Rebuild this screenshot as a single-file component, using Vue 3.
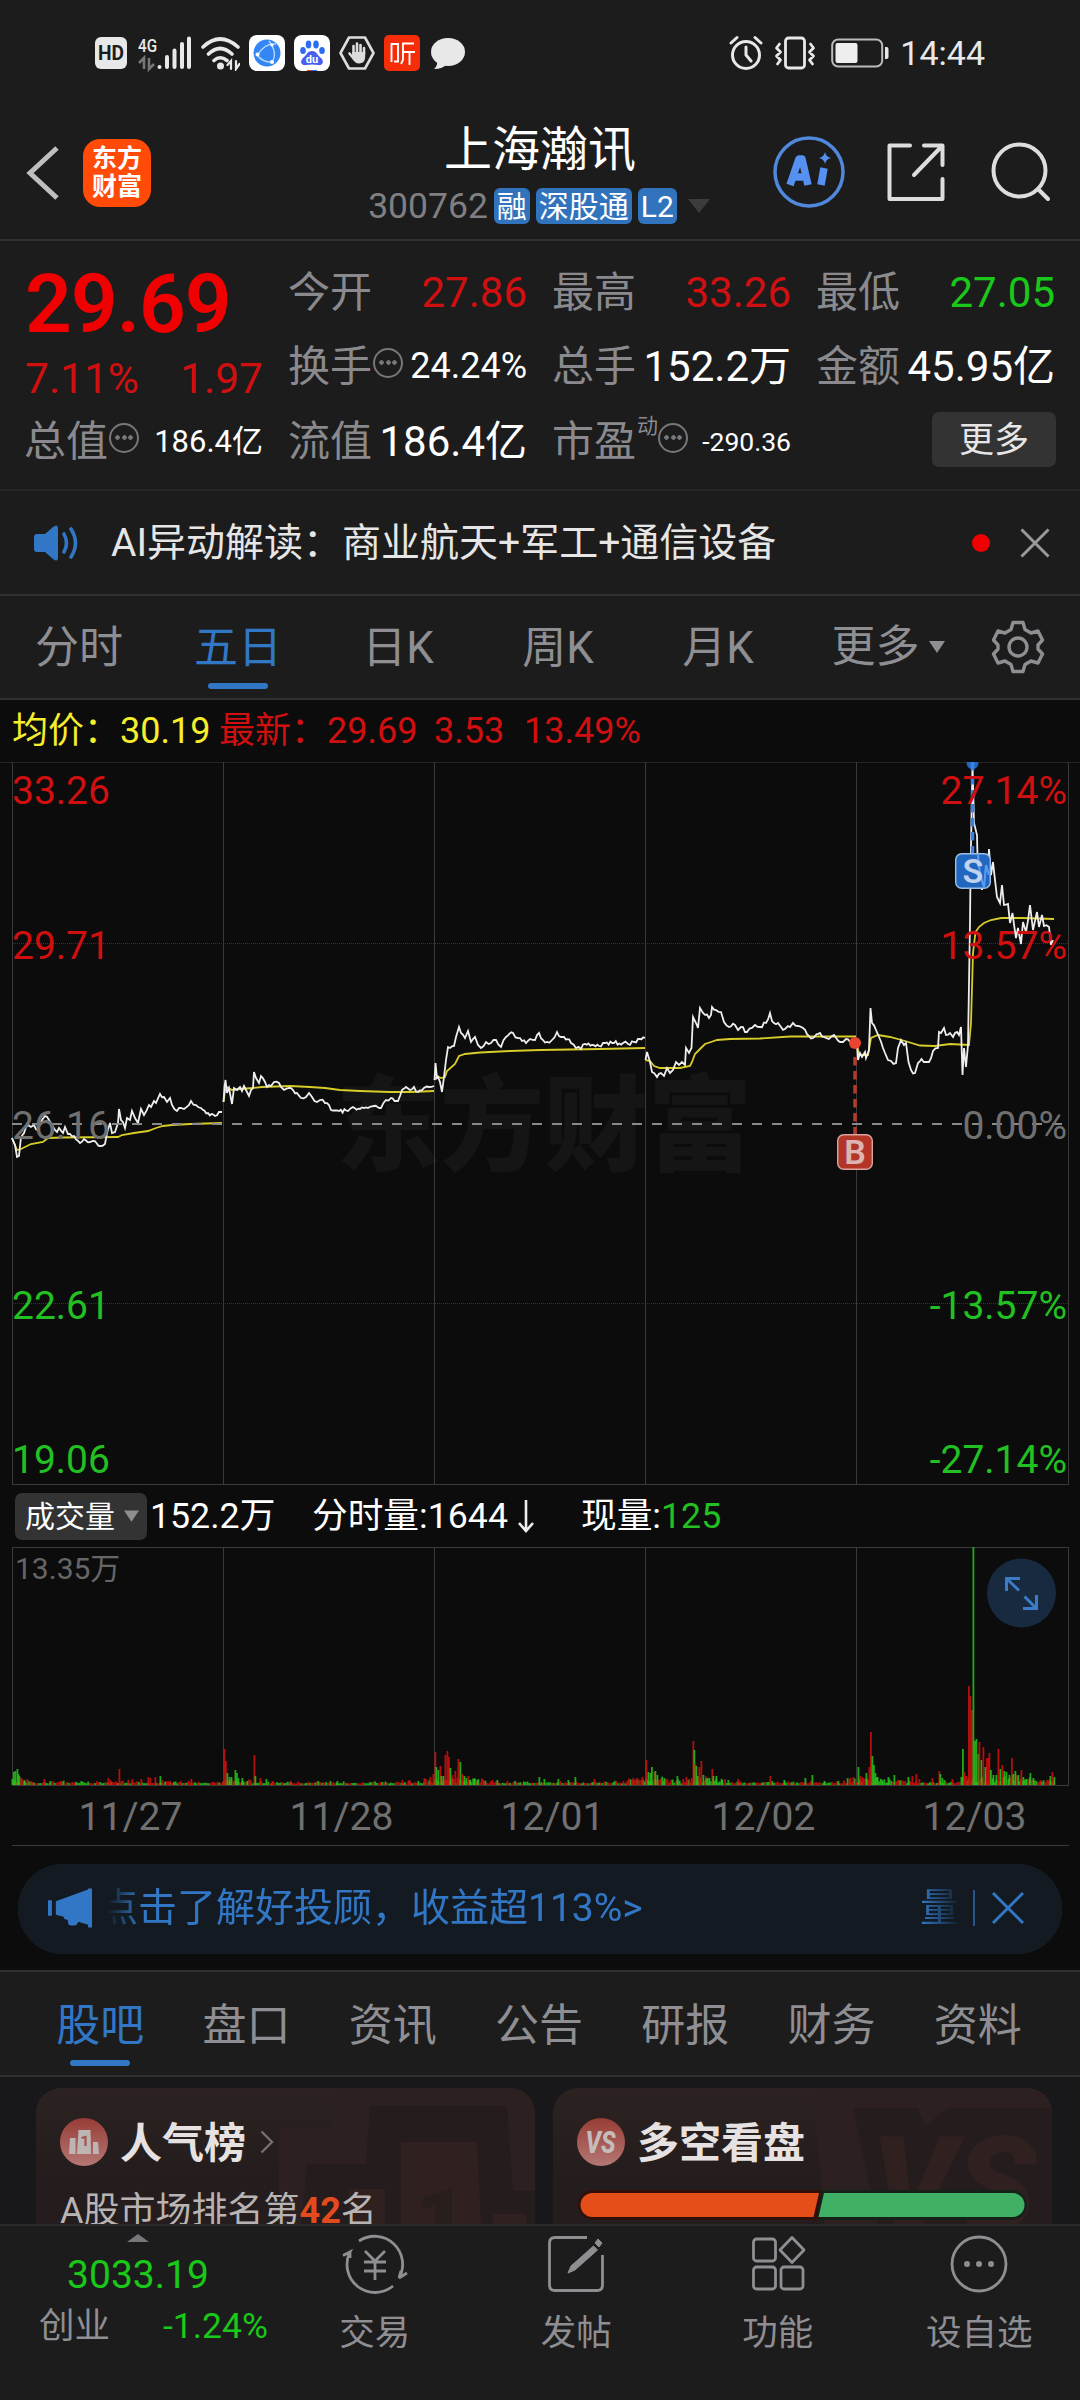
<script setup>
import { ref } from "vue"

const period = ref("五日")
const section = ref("股吧")

const periods = ["分时", "五日", "日K", "周K", "月K"]
const sections = ["股吧", "盘口", "资讯", "公告", "研报", "财务", "资料"]
const dates = ["11/27", "11/28", "12/01", "12/02", "12/03"]

const gridX = [12.5, 223.5, 434.5, 645.5, 856.5, 1068.5]

const axis = [
  { y: 42, price: "33.26", rate: "27.14%", type: "up" },
  { y: 197, price: "29.71", rate: "13.57%", type: "up" },
  { y: 377, price: "26.16", rate: "0.00%", type: "flat" },
  { y: 557, price: "22.61", rate: "-13.57%", type: "down" },
  { y: 711, price: "19.06", rate: "-27.14%", type: "down" }
]

const priceLines = [
  "12,376 15,383 17,395 19,394 21,375 24,371 28,363 31,365 34,363 38,368 42,358 45,354 49,358 52,363 57,370 59,366 63,371 65,365 68,372 74,374 80,381 84,377 90,380 93,379 100,384 105,382 107,371 110,361 112,371 115,370 118,361 119,347 121,358 125,366 127,356 130,358 132,349 135,356 138,361 141,347 144,353 149,343 151,345 154,339 156,341 160,332 164,335 167,340 170,336 172,343 177,349 181,346 184,347 189,343 191,339 196,343 201,346 208,351 215,354 219,350 222,350",
  "223.5,340 224.5,325 225.5,318 227,331 229,326 232,342 234,326 237,328 240,325 242,329 244,324 247,330 249,334 251,328 253,326 254,310 256,316 259,321 261,314 265,320 267,325 271,324 274,320 279,321 281,325 284,328 289,326 293,328 297,331 301,336 306,335 309,331 312,335 317,340 320,338 325,341 329,343 331,348 339,349 348,349 353,345 360,347 368,346 374,344 381,346 386,338 391,336 398,339 402,328 406,325 410,328 414,325 418,330 424,326 429,325 434,324",
  "434.5,318 435.5,301 437,316 438,315 440,320 442,330 444,315 446,298 448,285 450,286 454,284 456,275 459,265 461,271 465,276 468,269 471,280 475,275 478,283 481,286 486,280 491,281 496,278 501,285 506,275 513,271 518,276 526,281 530,277 535,278 539,271 543,278 547,280 552,278 557,270 561,275 564,275 571,281 576,286 581,287 585,282 592,283 599,284 605,281 614,281 623,281 628,282 634,280 638,277 645,276",
  "645.5,298 647,290 650,300 652,310 657,315 661,311 664,314 667,306 670,311 673,308 676,300 679,303 682,300 685,303 686,286 689,291 691.5,286 693,255 696,261 698,266 700,246 703,251 709,256 711,253 712,245 716,248 721,250 724,260 729,265 735,263 738,268 741,265 747,270 752,266 755,263 760,265 766,261 770,251 772,259 778,261 781,265 785,267 788,264 790,265 793,261 798,264 803,266 809,274 813,276 820,271 824,275 829,277 834,273 840,280 843,280 846,277 852,280 856,281",
  "857,281 858,298 860,291 862,295 865,290 866,296 869,288 870.5,246 872,261 876,268 879,275 883,286 885,291 888,298 891,299 896,301 898,286 901,278 904,283 906,281 908.5,300 911,308 915,311 918,301 921.5,297 926,300 929,300 933,289 938,286 939,270 941,271 944,266 946,273 950,271 953,275 957,270 959,273 961,265 962.5,313 964,286 966,305 968,283 970,161 970.5,111 972.5,1 974,61 977,73 977.5,95 982,128 984,105 987,121 989,87 991,113 993,100 995,118 997,135 1000,141 1002,123 1004,143 1008,142 1010,161 1012.5,151 1016,176 1018,166 1021,182 1023,160 1026,170 1030,143 1033,168 1037,150 1039,165 1042,153 1044,164 1049,165 1051,183 1053,178"
]

const avgLines = [
  "12,376 17,388 21,387 31,382 43,380 48,376 62,375.5 118,375 122,373 134,371 148,369 156,366 163,364 172,363 190,362 222,361",
  "223.5,340 225,329 227,325 232,328 240,327 253,326 262,325 290,324 310,325 325,326 340,328 360,329 390,330 410,330 434,329",
  "434.5,318 437,314 441,316 445,315 447,309 455,302 459,294 465,292 480,290.5 510,289 540,288 600,287 645,286",
  "645.5,298 650,299 654,304 660,306 680,306 690,304 692,300 695,292 700,287 705,282 711,280 717,278 730,277 760,276.5 790,274.5 856,274.5",
  "857,281 858.5,293 868,293 871,276 878,273 890,275 905,279 920,283.5 935,284 950,282 969,283 971,261 973,191 975.5,170 979,165 984,161 991,158 1001,156 1022,156 1054,157"
]

// small deterministic jitter between the key points
let seed = 7
const random = () => {
  seed = (seed * 16807) % 2147483647
  return seed / 2147483647
}

const jitter = (line) => {
  const points = line.split(" ").map(p => p.split(",").map(Number))
  const result = []
  points.forEach((point, i) => {
    result.push(point)
    const next = points[i + 1]
    if (!next || next[0] - point[0] < 3) return
    const steps = Math.floor((next[0] - point[0]) / 1.7)
    for (let s = 1; s < steps; s++) {
      const t = s / steps
      result.push([
        (point[0] + (next[0] - point[0]) * t).toFixed(1),
        (point[1] + (next[1] - point[1]) * t + (random() - 0.5) * 4).toFixed(1)
      ])
    }
  })
  return result.map(p => p.join(",")).join(" ")
}

const prices = priceLines.map(jitter)

// x, height, direction
const peaks = "12,6,g 13.5,13,g 15,14,g 17,16,g 18,11,g 19,9,g 21,7,r 24,5,g 27,6,r 31,4,r 44,6,r 50,4,g 61,4,r 108,7,r 110,5,r 119,16,r 121,4,r 128,5,r 132,6,r 141,6,r 148,8,r 150,7,r 155,8,r 160,9,g 162,5,r 170,4,r 188,4,r 191,6,r 224,36,r 225.5,24,r 227,12,g 229,8,g 231,8,g 235,15,g 236.5,12,g 238,7,g 242,7,g 247,4,g 254,30,r 255,9,g 260,7,r 266,6,g 272,4,r 290,4,r 318,4,g 330,4,g 337,4,g 402,5,r 409,5,r 418,4,g 424,7,r 430,8,r 433,11,r 435,33,r 436,18,g 438,15,g 440,19,r 441,9,g 443,9,g 445,30,r 447,34,r 448.5,28,r 450,17,g 452,10,r 455,14,r 458,26,r 460,23,g 462,11,r 464,9,g 466,7,g 468,9,r 470,5,g 474,6,g 477,5,g 483,5,r 492,5,r 497,5,g 507,4,r 539,8,g 544,6,g 558,6,g 568,5,g 575,8,g 594,6,r 623,4,r 633,7,r 637,7,r 642,8,r 646,25,r 648,13,g 650,12,g 651.5,18,g 654,13,r 655,14,g 657,10,g 664,7,g 677,9,g 686,8,r 689,6,r 693,44,r 694,35,g 695,21,r 696,19,g 697.5,9,g 699,18,r 701,24,r 703,10,g 706,6,g 709,7,g 712,16,r 713,9,g 716,6,g 722,5,g 728,5,g 738,6,r 770,9,r 772,4,g 784,5,g 805,7,g 812,10,g 824,4,g 838,4,g 850,7,r 853,8,r 858,18,g 860,9,r 862,8,r 866,12,g 869,18,r 870.5,53,r 872,29,g 873.5,20,g 875,12,g 877,8,g 882,5,g 888,8,g 894,10,g 898,5,r 908,8,g 912,9,r 916,11,r 919,6,r 932,7,r 939,14,r 940,11,g 942,7,g 944,5,g 952,6,r 962.5,36,g 964,13,r 966,9,r 968.5,99,r 970,89,r 971.5,75,r 974.5,44,g 976,46,g 978,31,g 979,43,r 981,25,g 983,38,r 985,18,g 986.5,27,r 988,27,r 989,32,r 990.5,15,g 993,10,g 996,10,g 998,36,r 1000,16,g 1002,20,r 1004,14,g 1006,13,g 1009,10,g 1011.5,27,r 1013,11,g 1015,14,g 1018,10,g 1021,15,r 1023,8,g 1026,6,g 1030,12,g 1033,7,g 1040,5,r 1050,9,g 1052,13,r 1054,8,g 973,238,g"

// first and last x of the busier stretches, and how high they go
const busy = [[12, 30, 3], [223, 250, 3], [425, 485, 5], [625, 680, 5], [682, 725, 5], [846, 885, 5], [888, 905, 3], [958, 1018, 8], [1018, 1055, 5]]

const volumes = []
for (let x = 12; x < 1055; x += 1.75) {
  const area = busy.find(b => x >= b[0] && x <= b[1])
  volumes.push({
    x,
    h: 1.6 + random() * random() * 3 + (area ? random() * area[2] : 0),
    up: random() > 0.5
  })
}
peaks.split(" ").forEach(item => {
  const [x, h, direction] = item.split(",")
  volumes.push({ x: Number(x) - 0.5, h: Number(h), up: direction === "r" })
})
</script>

<template>
  <div class="page">
    <div class="status">
      <svg class="hd" viewBox="0 0 34 34"><rect x="1" y="1" width="32" height="32" rx="6" fill="#e8e8e8" /><text x="17" y="24" text-anchor="middle" textLength="26" lengthAdjust="spacingAndGlyphs">HD</text></svg>
      <svg class="signal" viewBox="0 0 54 36">
        <text x="1" y="17" textLength="19" lengthAdjust="spacingAndGlyphs">4G</text>
        <path d="M7 34V23l-5 5M12 23v11l5-5" fill="none" stroke="#777" stroke-width="2.6" />
        <path d="M22.500 32v0M30 22v10M37.500 15.500v16.500M45 9v23M52 3.500v28.500" stroke="#e8e8e8" stroke-width="4" stroke-linecap="round" />
      </svg>
      <svg class="wifi" viewBox="0 0 40 36" fill="none" stroke="#e8e8e8" stroke-width="3.6" stroke-linecap="round">
        <path d="M3 12Q20-4 38 12M8.500 19Q20 8 32 19M14 25.500Q20 20 27 25.500" />
        <circle cx="20.500" cy="31" r="3.500" fill="#e8e8e8" stroke="none" />
        <path d="M31 34V26l-3.500 4M36 26v8l3.500-5" stroke-width="2.200" />
      </svg>
      <svg class="app" viewBox="0 0 36 36">
        <rect width="36" height="36" rx="8" fill="#fff" /><circle cx="18" cy="18" r="13.500" fill="#3486f5" />
        <path d="M8 21Q15 8 27 9M8 20Q14 28 25 27M20 6Q29 18 23 27" fill="none" stroke="#b9dcff" stroke-width="1.300" />
        <circle cx="8.500" cy="19.500" r="2" fill="#fff" /><circle cx="23" cy="27" r="2" fill="#fff" /><circle cx="23" cy="10" r="1.600" fill="#fff" />
      </svg>
      <svg class="app" viewBox="0 0 36 36">
        <rect width="36" height="36" rx="8" fill="#fff" />
        <g fill="#2c6cf0"><ellipse cx="9" cy="15.500" rx="2.800" ry="3.600" /><ellipse cx="14.500" cy="9.500" rx="2.800" ry="4" /><ellipse cx="22" cy="9.500" rx="2.800" ry="4" /><ellipse cx="28" cy="15.500" rx="2.800" ry="3.600" /></g>
        <path d="M18 16c5 0 5 4 9 7 4 4 1 8-3 7q-6-1-12 0c-4 1-7-3-3-7 4-3 4-7 9-7Z" fill="#4a5ff0" />
        <text class="du" x="18" y="28" text-anchor="middle">du</text>
        <path d="M13 36v-1h5v1Z" fill="#e33" /><path d="M18 36v-1h5v1Z" fill="#36f" />
      </svg>
      <svg class="app" viewBox="0 0 36 36" fill="none">
        <path d="M10 2.500H26L34.500 18L26 33.500H10L1.500 18Z" stroke="#ddd" stroke-width="2.600" stroke-linejoin="round" />
        <path d="M14.500 19V11M18 18V8.500M21.500 18V10M25 19V13M10.500 18.500l5 6" stroke="#ddd" stroke-width="2.600" stroke-linecap="round" />
        <path d="M13.200 17H26.200V22Q26 28.500 20 28.500Q16 28.500 13 23Z" fill="#ddd" />
      </svg>
      <svg class="app" viewBox="0 0 36 36">
        <rect width="36" height="36" rx="5" fill="#f52d08" />
        <path d="M7.500 27V9H14V26.500H10M30 8.500H19V25L17 29M19 17H31M25.500 17V30" fill="none" stroke="#fff" stroke-width="1.900" />
      </svg>
      <svg class="app" viewBox="0 0 36 36"><ellipse cx="19" cy="17" rx="17" ry="14" fill="#e8e8e8" /><path d="M8 25q1 6-3 9 9 0 13-5Z" fill="#e8e8e8" /></svg>
      <div class="grow"></div>
      <svg class="alarm" viewBox="0 0 34 36" fill="none" stroke="#e8e8e8" stroke-width="3" stroke-linecap="round">
        <circle cx="17" cy="20" r="13.500" /><path d="M17 12v8l5 6M2 8l6-5.500M32 8l-6-5.500" />
      </svg>
      <svg class="vibrate" viewBox="0 0 42 36" fill="none" stroke="#e8e8e8" stroke-width="2.800" stroke-linecap="round" stroke-linejoin="round">
        <rect x="11.500" y="3" width="19" height="30" rx="3" /><path d="M5.500 9l-3 4 4 4-4 4 4 4-3 4M36.500 9l3 4-4 4 4 4-4 4 3 4" />
      </svg>
      <svg class="battery" viewBox="0 0 58 30">
        <rect x="1.200" y="1.500" width="50" height="27" rx="6" fill="none" stroke="#bbb" stroke-width="2" />
        <rect x="4.500" y="5" width="22" height="20" rx="2" fill="#eee" /><path d="M54 9h1.500q2 0 2 2v8q0 2-2 2H54Z" fill="#e8e8e8" />
      </svg>
      <span class="clock">14:44</span>
    </div>

    <header class="header">
      <div class="left">
        <svg class="back" viewBox="0 0 34 56"><path d="M31 3L4 28L31 53" fill="none" stroke="#bfbfbf" stroke-width="5" /></svg>
        <div class="logo"><span>东方</span><span>财富</span></div>
      </div>
      <div class="name">
        <h1>上海瀚讯</h1>
        <div class="code">
          <span>300762</span><b>融</b><b>深股通</b><b>L2</b>
          <svg viewBox="0 0 22 14"><path d="M0 0H22L11 14Z" fill="#3c3c3c" /></svg>
        </div>
      </div>
      <div class="actions">
        <svg class="ai" viewBox="0 0 72 72">
          <circle cx="36" cy="36" r="34" fill="none" stroke="#5088dc" stroke-width="3.500" />
          <g fill="none" stroke="#5590f2" stroke-linejoin="round"><path d="M17 49L26 23H29L35 49M21 41H33" stroke-width="7.500" /><path d="M51 32L48 49" stroke-width="7.500" /></g>
          <path d="M52 16q1 5 6 6-5 1-6 6-1-5-6-6 5-1 6-6Z" fill="#5590f2" />
        </svg>
        <svg class="share" viewBox="0 0 60 60" fill="none" stroke="#ddd" stroke-width="4" stroke-linecap="round" stroke-linejoin="round">
          <path d="M24 3.500H3.500V57H56.500V37" /><path d="M38 3.500H56.500V23M56 4L28 33" />
        </svg>
        <svg class="search" viewBox="0 0 60 60" fill="none" stroke="#ddd" stroke-width="4" stroke-linecap="round"><circle cx="28.500" cy="28.500" r="26" /><path d="M47 47L57 57" /></svg>
      </div>
    </header>

    <section class="quote">
      <div class="last">29.69</div>
      <div class="cell"><label>今开</label><span class="up">27.86</span></div>
      <div class="cell"><label>最高</label><span class="up">33.26</span></div>
      <div class="cell"><label>最低</label><span class="down">27.05</span></div>
      <div class="cell change"><span class="up">7.11%</span><span class="up">1.97</span></div>
      <div class="cell"><label>换手</label><i class="more-dot"></i><span class="mid">24.24%</span></div>
      <div class="cell"><label>总手</label><span>152.2万</span></div>
      <div class="cell"><label>金额</label><span>45.95亿</span></div>
      <div class="cell"><label>总值</label><i class="more-dot"></i><span class="low">186.4亿</span></div>
      <div class="cell"><label>流值</label><span>186.4亿</span></div>
      <div class="cell"><label>市盈<sup>动</sup></label><i class="more-dot"></i><span class="small">-290.36</span></div>
      <div class="cell end"><button>更多</button></div>
    </section>

    <section class="notice">
      <svg class="speaker" viewBox="0 0 46 38">
        <path d="M3 10h8l8-7q5-4 5 2v28q0 6-5 2l-8-7H3q-3 0-3-3V13q0-3 3-3Z" fill="#3277c6" />
        <path d="M30 10q5 9 0 18M37 5q9 14 0 28" fill="none" stroke="#3277c6" stroke-width="3.600" stroke-linecap="round" />
      </svg>
      <span>AI异动解读：商业航天+军工+通信设备</span>
      <i class="red-dot"></i>
      <svg class="close" viewBox="0 0 30 30"><path d="M1.500 1.500L28.500 28.500M28.500 1.500L1.500 28.500" stroke="#999" stroke-width="3" /></svg>
    </section>

    <nav class="periods">
      <a v-for="item in periods" :key="item" :class="{ active: item === period }" @click="period = item">{{ item }}</a>
      <a class="wide">更多<svg viewBox="0 0 16 12"><path d="M0 0H16L8 12Z" fill="#8e8e93" /></svg></a>
      <svg class="gear" viewBox="0 0 54 54" fill="none" stroke="#8e8e93" stroke-width="3.400" stroke-linejoin="round">
        <path d="M22 2.500H32L34 9.500L40 13L47 11L51.500 20L47 25V29L51.500 34L47 43L40 41L34 44.500L32 51.500H22L20 44.500L14 41L7 43L2.500 34L7 29V25L2.500 20L7 11L14 13L20 9.500Z" /><circle cx="27" cy="27" r="9" />
      </svg>
    </nav>

    <div class="summary">
      <span class="avg">均价：30.19</span><span class="new">最新：29.69</span><span>3.53</span><span>13.49%</span>
    </div>

    <svg class="chart" viewBox="0 0 1080 723">
      <text class="watermark" x="336" y="401">东方财富</text>
      <path class="grid" d="M0 0H1080M12 722.500H1069" />
      <line v-for="x in gridX" :key="x" class="grid" :x1="x" :x2="x" y1="0" y2="723" />
      <path class="dotted" d="M13 181.500H1068M13 541.500H1068" />
      <polyline v-for="line in avgLines" :key="line" class="avg-line" :points="line" />
      <polyline v-for="line in prices" :key="line" class="price-line" :points="line" />
      <path class="zero" d="M12 362H1064" />
      <circle cx="855" cy="281" r="6" fill="#e8442f" />
      <path d="M855 295V372" stroke="#b53a2b" stroke-width="3.500" stroke-dasharray="8.500 5.500" />
      <rect x="837.700" y="372.700" width="34.600" height="34.600" rx="6" fill="#b33527" stroke="#d9a59e" stroke-width="1.400" />
      <text class="mark buy" x="855" y="401.500">B</text>
      <path d="M966.500 0h12q0 7-6 7t-6-7Z" fill="#1f68c4" />
      <path d="M972.500 0V91" stroke="#3c82e0" stroke-width="3.500" stroke-dasharray="8.500 5.500" />
      <rect x="955.700" y="91.700" width="34.600" height="34.600" rx="6" fill="#2167c0" stroke="#9cc0ea" stroke-width="1.400" />
      <path d="M978 93l2 20 4 12 2-22 3 10" fill="none" stroke="#5a9cf5" stroke-width="2" />
      <text class="mark sell" x="973" y="120.500">S</text>
      <template v-for="row in axis" :key="row.price">
        <text :class="['axis', row.type]" x="12" :y="row.y">{{ row.price }}</text>
        <text :class="['axis', 'right', row.type]" x="1067" :y="row.y">{{ row.rate }}</text>
      </template>
    </svg>

    <div class="volume-head">
      <span class="pill">成交量<svg viewBox="0 0 16 12"><path d="M0 0H16L8 12Z" fill="#8e8e8e" /></svg></span>
      <span class="total">152.2万</span>
      <span class="minute">分时量:1644<svg viewBox="0 0 18 34"><path d="M9 1V32M2 24L9 32L16 24" fill="none" stroke="#eee" stroke-width="2.600" /></svg></span>
      <span>现量:<em>125</em></span>
    </div>

    <svg class="volume" viewBox="0 0 1080 239">
      <path class="grid" d="M12 .500H1069M12 238.500H1069" />
      <line v-for="x in gridX" :key="x" class="grid" :x1="x" :x2="x" y1="0" y2="239" />
      <rect v-for="(bar, i) in volumes" :key="i" :x="bar.x" :y="238 - bar.h" width="1.800" :height="bar.h" :class="bar.up ? 'bar-up' : 'bar-down'" />
      <text class="volume-max" x="15" y="32">13.35万</text>
      <circle cx="1021.500" cy="46" r="34.500" fill="#182a40" />
      <path d="M1006.500 44V31.500H1020M1007 32L1019 43.500M1024.500 49.500L1036 61M1036.500 48V61.500H1023" fill="none" stroke="#3a7cc8" stroke-width="3" />
    </svg>
    <div class="dates"><span v-for="date in dates" :key="date">{{ date }}</span></div>

    <div class="banner">
      <svg class="horn" viewBox="0 0 46 40"><path d="M0 12h4v16H0ZM8 13L41 1V0h4v40h-4v-3l-10-3q-2 6-10 3l-1-5q-4 0-4-3l-8-2Z" fill="#3277c6" /></svg>
      <div class="marquee"><span>点击了解好投顾，收益超113%&gt;</span><span class="next">量</span></div>
      <i class="divider"></i>
      <svg class="banner-close" viewBox="0 0 34 34"><path d="M2 2L32 32M32 2L2 32" stroke="#3277c6" stroke-width="3" /></svg>
    </div>

    <nav class="sections">
      <a v-for="item in sections" :key="item" :class="{ active: item === section }" @click="section = item">{{ item }}</a>
    </nav>

    <div class="cards">
      <article class="card">
        <svg class="card-bg" viewBox="0 0 499 137">
          <path d="M243 137V40H297V0H499V137Z" fill="#2c2120" /><path d="M265 137L271 76H330L334 18H471L477 103H499V137Z" fill="#251d1d" />
          <path d="M365 137V54H441L445 137ZM313 137V101H349V137ZM457 137V126H490V137Z" fill="#302020" /><path d="M386 110l30-10v37h-17v-20l-13 4Z" fill="#281e1d" />
        </svg>
        <div class="card-title">
          <svg class="badge" viewBox="0 0 48 48">
            <defs><linearGradient id="badgeFill" x2="0" y2="1"><stop offset="0" stop-color="#983c36" /><stop offset="1" stop-color="#b47874" /></linearGradient></defs>
            <circle cx="24" cy="24" r="24" fill="url(#badgeFill)" />
            <path d="M10 20h5.500v16H9ZM18.500 12h12L31 36H17ZM33 24h5l1 12h-6Z" fill="#bdb5b4" /><path d="M21.500 20l4-1v9" fill="none" stroke="#a25550" stroke-width="2.200" />
          </svg>
          <h2>人气榜</h2>
          <svg class="chevron" viewBox="0 0 14 24"><path d="M1.500 1.500L12 12L1.500 22.500" fill="none" stroke="#77706f" stroke-width="2.400" /></svg>
        </div>
        <p>A股市场排名第<b>42</b>名</p>
      </article>
      <article class="card">
        <svg class="card-bg" viewBox="0 0 499 137">
          <path d="M260 0H499V137H272Z" fill="#2c2120" /><path d="M300 20H365L372 38L395 20H499V137H325Z" fill="#251d1d" />
          <text class="vs-bg" x="318" y="142">VS</text>
        </svg>
        <div class="card-title">
          <svg class="badge" viewBox="0 0 48 48"><circle cx="24" cy="24" r="24" fill="url(#badgeFill)" /><text class="vs" x="23.500" y="35" text-anchor="middle" textLength="30" lengthAdjust="spacingAndGlyphs">VS</text></svg>
          <h2>多空看盘</h2>
        </div>
        <svg class="ratio" viewBox="0 0 449 30">
          <rect width="449" height="30" rx="15" fill="#16211a" /><path d="M15 0H243L239 30H15A15 15 0 0 1 15 0Z" fill="#32100a" />
          <path d="M14.500 3H241L235.500 27H14.500A12 12 0 0 1 14.500 3Z" fill="#e54e19" /><path d="M246 3H434.500A12 12 0 0 1 434.500 27H240.500Z" fill="#3fb064" />
        </svg>
      </article>
    </div>

    <footer class="bottom">
      <div class="index">
        <svg viewBox="0 0 22 8"><path d="M11 0L22 8H0Z" fill="#77777b" /></svg>
        <strong>3033.19</strong>
        <div><span>创业</span><em>-1.24%</em></div>
      </div>
      <div class="item">
        <svg viewBox="0 0 66 60"><path d="M17 7A28 28 0 0 1 57 44L65 39M51 52A28 28 0 0 1 8 18L1 21.500M8 18V24M57 44L59 37" /><path d="M23 17L33 27L43 17M22 28H44M22 37H44M33 27V46" /></svg>
        <span>交易</span>
      </div>
      <div class="item">
        <svg viewBox="0 0 66 60"><path d="M44 3.500H12Q6.500 3.500 6.500 9V51Q6.500 56.500 12 56.500H54Q59.500 56.500 59.500 51V21" /><path d="M55 5l4 4-3 4-4-4ZM50.500 12l4 4L32 36l-7 3 3-7Z" fill="#8e8e93" stroke-width="1" /></svg>
        <span>发帖</span>
      </div>
      <div class="item">
        <svg viewBox="0 0 66 60"><rect x="8.500" y="5" width="22" height="22" rx="3" /><rect x="8.500" y="33" width="22" height="22" rx="3" /><rect x="36" y="33" width="22" height="22" rx="3" /><path d="M47 3.500L59 16L47 28.500L35 16Z" stroke-linejoin="round" /></svg>
        <span>功能</span>
      </div>
      <div class="item">
        <svg viewBox="0 0 66 60"><circle cx="33" cy="30" r="27" /><g fill="#8e8e93" stroke="none"><circle cx="21" cy="30" r="3" /><circle cx="33" cy="30" r="3" /><circle cx="45" cy="30" r="3" /></g></svg>
        <span>设自选</span>
      </div>
    </footer>
  </div>
</template>

<style>
body {
  background: #1c1c1c;
}
</style>

<style scoped>
.page {
  width: 1080px;
  height: 2400px;
  overflow: hidden;
  background: #1c1c1c;
  color: #fff;
  font-family: Roboto, "Noto Sans CJK SC", sans-serif;
}

.page * {
  box-sizing: border-box;
}

svg {
  display: block;
  flex: none;
}

em,
i {
  font-style: normal;
}

.status {
  display: flex;
  align-items: center;
  gap: 9px;
  height: 105px;
  padding: 0 95px 0 94px;
}

.hd {
  width: 34px;
  height: 34px;
}

.hd text {
  font-size: 20px;
  font-weight: 700;
  fill: #1c1c1c;
}

.signal {
  width: 54px;
  height: 36px;
  overflow: visible;
}

.signal text {
  font-size: 19px;
  font-weight: 500;
  fill: #e8e8e8;
}

.wifi {
  width: 40px;
  height: 36px;
}

.app {
  width: 36px;
  height: 36px;
}

.du {
  font-size: 11px;
  font-weight: 700;
  fill: #fff;
}

.grow {
  flex: 1;
}

.alarm {
  width: 34px;
  height: 36px;
}

.vibrate {
  width: 42px;
  height: 36px;
  margin-left: 2px;
}

.battery {
  width: 58px;
  height: 30px;
  margin-left: 6px;
}

.clock {
  margin-left: 2px;
  color: #e8e8e8;
  font-size: 34px;
  line-height: 40px;
}

.header {
  display: grid;
  grid-template-columns: 330px 1fr 330px;
  height: 136px;
  border-bottom: 2px solid #303030;
}

.left {
  display: flex;
  align-items: center;
  gap: 23px;
  padding: 2px 0 0 26px;
}

.back {
  width: 34px;
  height: 56px;
}

.logo {
  display: flex;
  flex-direction: column;
  align-items: center;
  justify-content: center;
  width: 68px;
  height: 68px;
  border-radius: 17px;
  background: #ff4a08;
  font-size: 25px;
  font-weight: 700;
  line-height: 28px;
}

.name {
  display: flex;
  flex-direction: column;
  align-items: center;
  padding-top: 17px;
}

h1 {
  margin: 0;
  font-size: 48px;
  font-weight: 400;
  line-height: 56px;
}

.code {
  display: flex;
  align-items: center;
  gap: 6px;
  height: 36px;
  margin: 10px 2px 0 0;
  color: #808084;
  font-size: 35.5px;
  line-height: 36px;
}

.code b {
  height: 36px;
  padding: 0 3px;
  border-radius: 6px;
  background: #3173bd;
  color: #fff;
  font-size: 30px;
  font-weight: 400;
  line-height: 37px;
}

.code svg {
  width: 22px;
  height: 14px;
  margin-left: 5px;
}

.actions {
  display: flex;
  align-items: center;
  justify-content: flex-end;
  gap: 43px;
  padding: 0 29px 0 0;
}

.ai {
  width: 72px;
  height: 72px;
}

.share,
.search {
  width: 60px;
  height: 60px;
}

.share {
  margin: 0 2px 0 -2px;
}

.quote {
  display: grid;
  grid-template-columns: repeat(4, 238px);
  grid-template-rows: 74px 75px 75px;
  column-gap: 26px;
  height: 250px;
  padding: 14px 25px 0;
  border-bottom: 2px solid #262626;
}

.last {
  color: #f00000;
  font-size: 82px;
  font-weight: 600;
  line-height: 98px;
  letter-spacing: -1px;
}

.cell {
  display: flex;
  align-items: center;
  justify-content: space-between;
  height: 75px;
  font-size: 42px;
  line-height: 75px;
  white-space: nowrap;
}

.cell label {
  margin-left: -1px;
  color: #8a8a8e;
}

.cell sup {
  display: inline-block;
  width: 20px;
  margin-left: 1px;
  font-size: 21px;
  line-height: 20px;
  vertical-align: 23px;
}

.change {
  padding-top: 24px;
  font-size: 42.5px;
}

.mid {
  font-size: 36px;
}

.low {
  font-size: 31px;
}

.small {
  font-size: 26.5px;
}

.up {
  color: #d01010;
}

.down {
  color: #19c819;
}

.more-dot {
  flex: none;
  width: 30px;
  height: 30px;
  margin: -8px auto 0 1px;
  border: 2px solid #77777b;
  border-radius: 50%;
  background: radial-gradient(circle, #77777b 2px, transparent 2.5px) center / 7px 7px no-repeat,
    radial-gradient(circle, #77777b 2px, transparent 2.5px) 3px 50% / 7px 7px no-repeat,
    radial-gradient(circle, #77777b 2px, transparent 2.5px) 16px 50% / 7px 7px no-repeat;
}

.end {
  justify-content: flex-end;
}

.end button {
  width: 124px;
  height: 55px;
  margin: -5px -1px 0 0;
  border: 0;
  border-radius: 7px;
  background: #333;
  color: #e6e6e6;
  font-family: inherit;
  font-size: 35px;
  line-height: 55px;
}

.notice {
  display: flex;
  align-items: center;
  height: 105px;
  padding: 0 30px 0 34px;
  border-bottom: 2px solid #303030;
  color: #e6e6e6;
  font-size: 39px;
  line-height: 100px;
}

.speaker {
  width: 46px;
  height: 38px;
  margin-right: 31px;
}

.red-dot {
  width: 18px;
  height: 18px;
  margin: 0 30px 0 auto;
  border-radius: 50%;
  background: #f00000;
}

.close {
  width: 30px;
  height: 30px;
}

.periods {
  display: flex;
  align-items: center;
  height: 104px;
  border-bottom: 2px solid #303030;
  color: #8e8e93;
  font-size: 44px;
}

.periods a {
  display: flex;
  flex-direction: column;
  align-items: center;
  width: 160px;
  height: 104px;
  line-height: 107px;
}

.periods a:first-child {
  width: 158px;
}

.periods .wide {
  flex-direction: row;
  justify-content: center;
  gap: 9px;
  width: 180px;
}

.wide svg {
  width: 16px;
  height: 12px;
}

.active {
  color: #3277c6;
}

.active::after {
  content: "";
  width: 60px;
  height: 6px;
  margin-top: -19px;
  border-radius: 3px;
  background: #3277c6;
}

.gear {
  width: 54px;
  height: 54px;
  margin: 0 0 0 13px;
}

.summary {
  display: flex;
  align-items: center;
  height: 62px;
  padding-left: 12px;
  background: #0c0c0c;
  color: #d01010;
  font-size: 36px;
  line-height: 62px;
  white-space: pre;
}

.avg {
  width: 207px;
  color: #f6ee2c;
}

.new {
  width: 215px;
}

.new + span {
  width: 90px;
}

.chart {
  width: 1080px;
  height: 723px;
  background: #0c0c0c;
}

.grid {
  fill: none;
  stroke: #3a3a3a;
  stroke-width: 1;
}

.dotted {
  fill: none;
  stroke: #333;
  stroke-dasharray: 1 1;
}

.zero {
  stroke: #8a8a8a;
  stroke-width: 2;
  stroke-dasharray: 10 10;
}

.avg-line {
  fill: none;
  stroke: #d8cc28;
  stroke-width: 1.8;
}

.price-line {
  fill: none;
  stroke: #eee;
  stroke-width: 1.8;
}

.watermark {
  fill: #151515;
  font-size: 104px;
  font-weight: 900;
}

.axis {
  font-size: 39px;
}

.axis.up {
  fill: #d01010;
}

.axis.down {
  fill: #22c022;
}

.axis.flat {
  fill: #707070;
}

.right {
  text-anchor: end;
}

.mark {
  font-size: 34px;
  font-weight: 600;
  text-anchor: middle;
}

.buy {
  fill: #dcb4b0;
}

.sell {
  fill: #c0d2ec;
}

.volume-head {
  display: flex;
  align-items: center;
  height: 62px;
  padding-left: 15px;
  background: #0c0c0c;
  font-size: 35.7px;
  line-height: 60px;
  white-space: nowrap;
}

.pill {
  display: flex;
  align-items: center;
  justify-content: space-between;
  width: 132px;
  height: 47px;
  padding: 0 8px 0 10px;
  border-radius: 7px;
  background: #333;
  font-size: 30px;
  line-height: 47px;
}

.pill svg {
  width: 15px;
  height: 12px;
}

.total {
  width: 162px;
  padding-left: 3px;
}

.minute {
  display: flex;
  align-items: center;
  gap: 9px;
  width: 272px;
  padding-left: 3px;
}

.minute svg {
  width: 18px;
  height: 34px;
}

.volume-head em {
  color: #22c022;
}

.volume {
  width: 1080px;
  height: 239px;
  background: #0c0c0c;
}

.volume-max {
  fill: #666;
  font-size: 30px;
}

.bar-up {
  fill: #d01010;
  opacity: 0.85;
}

.bar-down {
  fill: #28c41c;
  opacity: 0.85;
}

.dates {
  display: grid;
  grid-template-columns: repeat(5, 211px);
  height: 60px;
  padding-left: 25px;
  background: linear-gradient(#3a3a3a, #3a3a3a) 12px 59px / 1057px 1px no-repeat #0c0c0c;
  color: #707070;
  font-size: 39px;
  line-height: 62px;
  text-align: center;
}

.banner {
  display: flex;
  align-items: center;
  height: 126px;
  padding: 0 55px 0 48px;
  background: radial-gradient(circle at 63px 63px, #131a22 45px, transparent 45.5px),
    radial-gradient(circle at 1017px 63px, #131a22 45px, transparent 45.5px),
    linear-gradient(#131a22, #131a22) 63px 18px / 954px 90px no-repeat #0c0c0c;
  border-bottom: 2px solid #303030;
  color: #3277c6;
  font-size: 39px;
  line-height: 60px;
}

.horn {
  width: 45px;
  height: 40px;
}

.marquee {
  display: flex;
  justify-content: space-between;
  width: 863px;
  margin-left: 6px;
  white-space: nowrap;
  mask-image: linear-gradient(90deg, transparent 8px, #000 42px, #000 822px, transparent 862px);
}

.next {
  width: 40px;
}

.divider {
  width: 2px;
  height: 36px;
  margin: 0 16px 0 13px;
  background: #28568c;
}

.banner-close {
  width: 34px;
  height: 34px;
}

.sections {
  display: grid;
  grid-template-columns: repeat(7, 1fr);
  height: 105px;
  padding: 0 29px 0 27px;
  border-bottom: 2px solid #303030;
  color: #8e8e93;
  font-size: 44px;
}

.sections a {
  display: flex;
  flex-direction: column;
  align-items: center;
  height: 104px;
  line-height: 108px;
}

.sections .active::after {
  margin-top: -20px;
}

.cards {
  display: grid;
  grid-template-columns: 499px 499px;
  gap: 18px;
  height: 147px;
  padding: 11px 36px 0;
  overflow: hidden;
  background: #18181a;
}

.card {
  position: relative;
  height: 180px;
  padding: 30px 24px 0;
  border-radius: 25px;
  overflow: hidden;
  background: linear-gradient(#2b2221, #251d1d 50%);
}

.card-bg {
  position: absolute;
  left: 0;
  top: 0;
  width: 499px;
  height: 137px;
}

.card-title {
  position: relative;
  display: flex;
  align-items: center;
  height: 48px;
}

.badge {
  width: 48px;
  height: 48px;
}

.vs {
  fill: #c5bcbb;
  font-size: 31px;
  font-style: italic;
  font-weight: 800;
}

.vs-bg {
  fill: #302020;
  font-size: 132px;
  font-style: italic;
  font-weight: 900;
}

h2 {
  margin: 3px 0 0 12px;
  color: #e6e2e2;
  font-size: 42px;
  font-weight: 700;
  line-height: 48px;
}

.chevron {
  width: 14px;
  height: 24px;
  margin-left: 14px;
}

.card p {
  position: relative;
  margin: 20px 0 0;
  color: #b8b4b4;
  font-size: 36px;
  line-height: 50px;
}

.card p b {
  color: #e34a1e;
}

.ratio {
  position: relative;
  width: 449px;
  height: 30px;
  margin: 24px 0 0 1px;
}

.bottom {
  display: grid;
  grid-template-columns: 274px repeat(4, 201.5px);
  height: 176px;
  border-top: 2px solid #2a2a2a;
  color: #8e8e93;
  font-size: 35.5px;
}

.index {
  display: flex;
  flex-direction: column;
  align-items: center;
  padding: 8px 0 0;
}

.index svg {
  width: 22px;
  height: 8px;
  margin-left: 2px;
}

.index strong {
  margin: 9px 0 0 2px;
  color: #19c819;
  font-size: 39px;
  font-weight: 400;
  line-height: 48px;
}

.index div {
  display: flex;
  justify-content: space-between;
  width: 229px;
  margin: 3px 0 0 33px;
  line-height: 48px;
}

.index em {
  color: #19c819;
}

.item {
  display: flex;
  flex-direction: column;
  align-items: center;
  padding-top: 8px;
}

.item svg {
  width: 66px;
  height: 60px;
  fill: none;
  stroke: #8e8e93;
  stroke-width: 2.8;
}

.item span {
  margin-top: 14px;
  line-height: 50px;
}
</style>
